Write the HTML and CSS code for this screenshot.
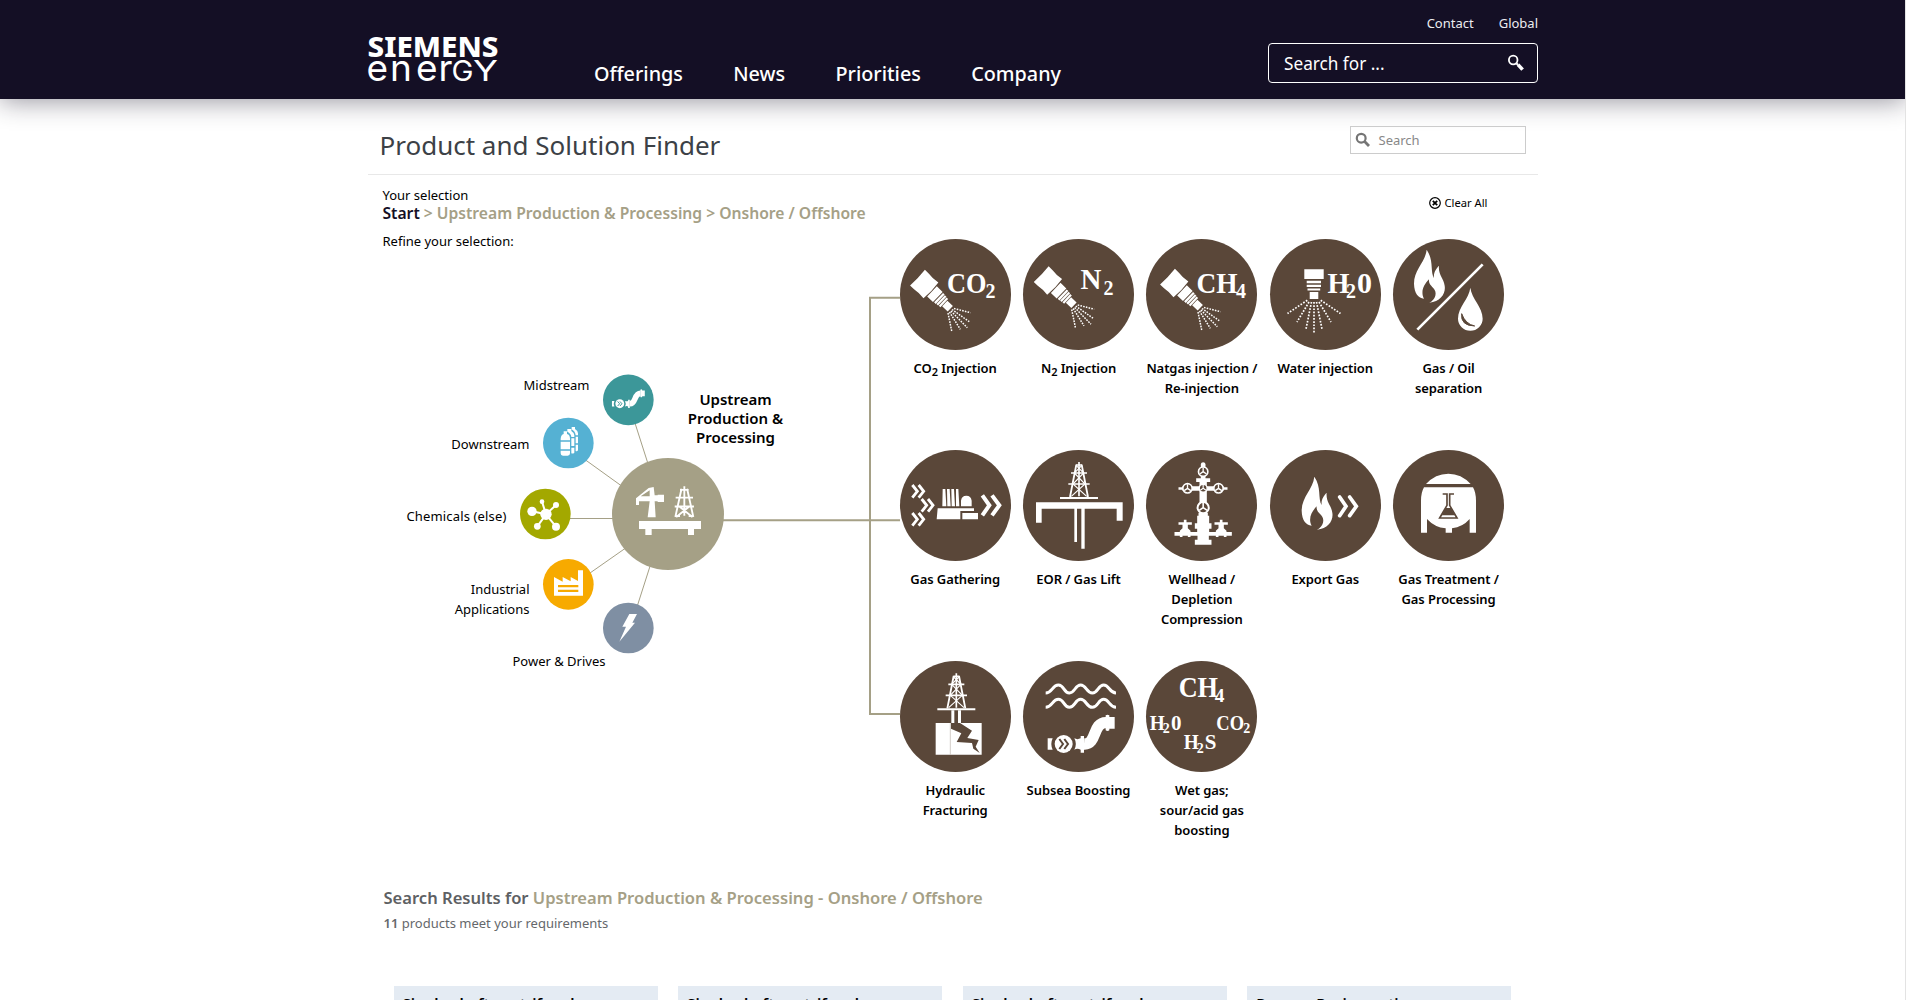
FILE: index.html
```html
<!DOCTYPE html>
<html lang="en">
<head>
<meta charset="utf-8">
<title>Product and Solution Finder</title>
<link rel="stylesheet" href="styles.css">
</head>
<body>
<svg class="defs" aria-hidden="true">
  <defs>
    <g id="nozzle">
      <g transform="translate(50.5 70) rotate(-46.5)" fill="#fff">
        <path d="M-10.8-45.5Q0-44.5 10.8-45.5V-40Q9.8-34 10.8-27Q0-25.5-10.8-27Q-9.8-34-10.8-40Z"/>
        <path d="M-7-25.500h14v8h-14zM-6.500-16.5h13v2.300h-13zM-6.100-13.600h12.200v2.200h-12.200zM-5.600-10.8h11.200v2.200h-11.200zM-3.800-7.9h7.600V-.3h-7.600z"/>
      </g>
      <g fill="none" stroke="#fff" stroke-width="1.5" stroke-dasharray="1.6 1.2">
        <path d="M54 69.5L70.5 73.7M52 70.5L69.3 82.7M51 72L67.3 88.7M49.5 73L60.3 90.3M48 74L51.7 92"/>
      </g>
    </g>
    <path id="flame" d="M680 74C676 112 642 134 642 176C643 206 655 218 672 221C661 200 671 180 687 163C684 186 712 186 706 212Q702 226 688 233C722 230 738 205 734 182C731 160 714 150 717 122C708 132 700 142 702 160C690 138 702 106 680 74Z"/>
    <g id="derrick" fill="none" stroke="#fff">
      <path stroke-width="6" d="M-57-3H57"/>
      <path stroke-width="5" d="M0-111V-8M-9-102H9M-24-78H24M-32-45H32"/>
      <path stroke-width="5.5" d="M-8-103L-27-6M8-103L27-6"/>
      <path stroke-width="3.5" d="M-8-100L14-78L-18-45L23-8M8-100L-14-78L18-45L-23-8"/>
    </g>
    <g id="wheel">
      <circle r="14" fill="#5a4739" stroke="#fff" stroke-width="5"/>
      <path d="M0 0V-12M0 0L-10 7M0 0L10 7" stroke="#fff" stroke-width="4"/>
    </g>
    <g id="pipe">
      <path d="M563 265H578Q570 282 578 299H563ZM643 265Q652 270 662 265V258H672V299L672 308H662V299Q652 294 643 299Q652 282 643 265Z"/>
      <path d="M672 282C712 284 696 218 738 218" fill="none" stroke="#fff" stroke-width="34"/>
      <path d="M737 200V196Q743 192 748 196V201H764V236H748V241Q743 245 737 241Z"/>
      <circle cx="611" cy="282" r="27"/>
    </g>
  </defs>
</svg>

<header class="header">
  <div class="wrap header-inner">
    <svg class="logo" width="132" height="50" viewBox="0 0 132 50" role="img" aria-label="Siemens Energy">
      <text class="logo-top" x="-0.5" y="22.6" textLength="131" lengthAdjust="spacingAndGlyphs">SIEMENS</text>
      <text class="logo-bottom" y="46.8" x="-1.5 22 48 70.5">ener</text>
      <text class="logo-bottom logo-caps" y="46.8" x="83.5" textLength="22" lengthAdjust="spacingAndGlyphs">g</text>
      <text class="logo-bottom logo-caps" y="46.8" x="105" textLength="25" lengthAdjust="spacingAndGlyphs">y</text>
    </svg>
    <nav class="nav">
      <a>Offerings</a><a>News</a><a>Priorities</a><a>Company</a>
    </nav>
    <div class="tools">
      <div class="meta"><a>Contact</a><a>Global</a></div>
      <div class="site-search">
        <span>Search for ...</span>
        <svg width="18" height="18" viewBox="0 0 18 18" fill="none" stroke="#fff"><circle cx="6.2" cy="6" r="4.3" stroke-width="1.8"/><path d="M9.5 9.4L11 10.8" stroke-width="2"/><path d="M11 10.6L15.6 15.6" stroke-width="3.6"/></svg>
      </div>
    </div>
  </div>
</header>

<main class="wrap">
  <div class="title-row">
    <h1>Product and Solution Finder</h1>
    <div class="finder-search">
      <svg width="16" height="16" viewBox="0 0 16 16" fill="none" stroke="#757575"><circle cx="6.2" cy="6.2" r="4.4" stroke-width="2.2"/><path d="M9.6 9.6L14 14" stroke-width="2.8"/></svg>
      <span>Search</span>
    </div>
  </div>

  <div class="finder">
    <section class="left">
      <p class="small">Your selection</p>
      <p class="crumbs"><b>Start</b> &gt; Upstream Production &amp; Processing &gt; Onshore / Offshore</p>
      <p class="small refine">Refine your selection:</p>

      <svg class="links" width="532" height="560" viewBox="368 175 532 560" fill="none" stroke="#a5a086">
        <path stroke-width="2" d="M720 520.2H902M902 297.8H870V714H902"/>
        <path stroke-width="1" d="M634 420L650 470M580 456L630 492M560 518.5H620M580 580L630 545M636 610L652 560"/>
        <g transform="translate(390 360) scale(.33333)" stroke="none">
          <circle cx="834" cy="462" r="168" fill="#a5a086"/>
          <circle cx="715" cy="119.500" r="76" fill="#3c9799"/>
          <circle cx="535" cy="249" r="76" fill="#55b1d3"/>
          <circle cx="466" cy="462" r="76" fill="#a3a800"/>
          <circle cx="535" cy="673" r="76" fill="#f7aa00"/>
          <circle cx="715" cy="804" r="76" fill="#7f8fa3"/>
          <g fill="#fff">
            <path d="M747 483H933V507H912V525H894V507H785V525H766V507H747ZM773 472L779 424H747V435H738V415L776 384L791 381L794 406H803V404H822V426H803V424H794L797 472ZM752 409H779V391Z" fill-rule="evenodd"/>
            <g transform="translate(883 480) scale(.93 .92)"><path stroke="#fff" fill="none" stroke-width="6" d="M0-110V-14M-14-98H14M-28-73H28M-31-44H31M-9-102L-29-10M9-102L29-10M-16-44L26-10M16-44L-26-10M-30-13H-14M30-13H14"/></g>
            <g transform="translate(390 -7) scale(.49)"><use href="#pipe"/><path d="M598 268l12 14-12 14M612 268l12 14-12 14" fill="none" stroke="#3c9799" stroke-width="6"/></g>
            <path d="M512 236Q513 224 521 222V214H531V222Q540 224 540 236V241H512ZM512 245H540V268H512ZM512 272H540V280Q540 287 533 287H519Q512 287 512 280Z"/>
            <path d="M532 215V207H544V213Q553 218 553 226V231H544Q543 220 532 215ZM544 235H553V258H544ZM544 263H553V278Q549 282 544 280ZM545 208V201H555V207Q564 212 564 220V226H557Q556 214 545 208ZM557 230H564V250H557ZM557 254H564V271Q561 275 557 273Z"/>
            <circle cx="468" cy="463" r="17"/><circle cx="426" cy="454" r="14"/><circle cx="456" cy="425" r="7"/><circle cx="498" cy="435" r="9"/><circle cx="442" cy="499" r="10"/><circle cx="498" cy="500" r="12"/>
            <path d="M468 463L426 454M468 463L456 425M468 463L498 435M468 463L442 499M468 463L498 500" stroke="#fff" stroke-width="6"/>
            <path d="M492 707V651L518 665V651L542 664V651L564 663V631H579V707ZM504 675V682H565V675ZM504 689V696H565V689Z" fill-rule="evenodd"/>
            <path d="M718 762H741L727 788H735L688 845L708 800H697Z"/>
          </g>
        </g>
      </svg>
      <span class="node n-mid">Midstream</span>
      <span class="node n-down">Downstream</span>
      <span class="node n-chem">Chemicals (else)</span>
      <span class="node n-ind">Industrial<br>Applications</span>
      <span class="node n-power">Power &amp; Drives</span>
      <span class="node n-hub">Upstream<br>Production &amp;<br>Processing</span>
    </section>

    <section class="right">
      <a class="clear"><svg width="12" height="12" viewBox="0 0 12 12" fill="none" stroke="#000"><circle cx="6" cy="6" r="5.3" stroke-width="1.2"/><path d="M3.8 3.8L8.200 8.200M8.200 3.800L3.800 8.200" stroke-width="1.800"/></svg>Clear All</a>
      <div class="grid">
        <a class="tile"><svg viewBox="0 0 111 111"><use href="#nozzle"/><text class="f" x="47" y="54" font-size="30" textLength="39.500" lengthAdjust="spacingAndGlyphs">CO</text><text class="f" x="85.500" y="58.700" font-size="20">2</text></svg><span>CO<sub>2</sub> Injection</span></a>
        <a class="tile"><svg viewBox="0 0 111 111"><use href="#nozzle" x="0.700" y="-3.500"/><text class="f" x="57.500" y="50" font-size="29">N</text><text class="f" x="80.500" y="55.700" font-size="20">2</text></svg><span>N<sub>2</sub> Injection</span></a>
        <a class="tile"><svg viewBox="0 0 111 111"><use href="#nozzle" x="4" y="-1"/><text class="f" x="50.500" y="53.500" font-size="30" textLength="41" lengthAdjust="spacingAndGlyphs">CH</text><text class="f" x="90" y="58.700" font-size="20">4</text></svg><span>Natgas injection /<br>Re-injection</span></a>
        <a class="tile"><svg viewBox="0 0 111 111"><path fill="#fff" d="M34.300 30.300H53.700V40H34.300ZM36.700 41.800H51V44.300H36.700ZM36.700 45.700H51V48H36.700ZM37.500 49.400H50.200V51.600H37.500ZM39.700 53H48.300V60H39.700Z"/><path fill="none" stroke="#fff" stroke-width="1.700" stroke-dasharray="1.700 1.500" d="M37.300 61.300L17.500 74.500M39 63L27 83M41.500 63L36 90M44 63V94.500M46.500 63L52 90M49 63L61 83M50.700 61.300L70.500 74.500"/><text class="f" x="57.500" y="54.300" font-size="29" textLength="22" lengthAdjust="spacingAndGlyphs">H</text><text class="f" x="76" y="58.700" font-size="20">2</text><text class="f" x="87" y="54.300" font-size="30">0</text></svg><span>Water injection</span></a>
        <a class="tile"><svg viewBox="0 0 111 111"><g transform="translate(-193 -14) scale(.33333)" fill="#fff"><use href="#flame"/><path d="M652 314L848 118" stroke="#fff" stroke-width="8"/><path d="M811 188C807 222 774 246 774 281A37 36 0 0 0 848 281C848 246 815 222 811 188Z"/><path d="M785 266Q781 302 824 303Q796 297 785 266Z" fill="#5a4739" stroke="#5a4739" stroke-width="3"/></g></svg><span>Gas / Oil<br>separation</span></a>

        <a class="tile"><svg viewBox="0 0 111 111"><g transform="translate(-10 -10) scale(.33333)" fill="#fff"><g fill="none" stroke="#fff"><path stroke-width="8.500" d="M67 135L82 154L67 173M86 135L101 154L86 173M95 177L110 196L95 215M114 177L129 196L114 215M67 219L82 238L67 257M86 219L101 238L86 257"/><path stroke-width="12" d="M277 166L298 196L277 226M306 166L328 196L306 226"/></g><path d="M158 147H166L169 199H157ZM171 147H179L182 199H172ZM184 147H192L195 199H185ZM198 147H205L208 199H198ZM213 199V182Q215 167 229 167Q243 167 245 182V199ZM143 205H252V213H211V238H140ZM217 219H264V238H217Z"/></g></svg><span>Gas Gathering</span></a>
        <a class="tile"><svg viewBox="0 0 111 111"><g transform="translate(-133 -10) scale(.33333)" fill="#fff"><use href="#derrick" x="567" y="177"/><path d="M438 187H698V242H680V206H584V326H574V206H561V306H553V206H455V248H438Z"/></g></svg><span>EOR / Gas Lift</span></a>
        <a class="tile"><svg viewBox="0 0 111 111"><g transform="translate(-1.500 -2) scale(.33333)" fill="#fff"><path d="M169 48Q170 43 176 43Q182 43 183 48V91H197V102H187V115H237V118H249V125H237V128H187V195H190V203H194V226H201V242H194V252H214V248L222 241V230H210V223H226V215H234V223H250V230H238V241L246 248V252H262V263H246V267H238V263H222V267H214V263H193V275H201V290H151V275H159V263H138V267H130V263H114V267H106V263H90V252H106V248L114 241V230H102V223H118V215H126V223H142V230H130V241L138 248V252H158V242H151V226H158V203H162V195H165V128H114V125H102V118H114V115H165V102H155V91H169Z"/><use href="#wheel" x="176" y="71"/><use href="#wheel" x="129" y="121"/><use href="#wheel" x="222" y="121"/><use href="#wheel" transform="translate(176 121) scale(.85)"/><use href="#wheel" transform="translate(176 179) scale(1.200)"/></g></svg><span>Wellhead /<br>Depletion<br>Compression</span></a>
        <a class="tile"><svg viewBox="0 0 111 111"><g transform="translate(-70 -10) scale(.33333)" fill="#fff"><use href="#flame" x="-337" y="36"/><path fill="none" stroke="#fff" stroke-width="11" stroke-linecap="round" d="M419 171L438 199L419 227M449 171L469 199L449 227"/></g></svg><span>Export Gas</span></a>
        <a class="tile"><svg viewBox="0 0 111 111"><g transform="translate(-193 -10) scale(.33333)" fill="#fff"><path d="M678 132Q706 101 745 101Q784 101 812 132ZM672 142H819Q828 158 828 182V278H809V237Q788 261 756 265V278H737V265Q704 262 681 237V278H663V182Q663 158 672 142Z"/><path fill="none" stroke="#5a4739" stroke-width="5" d="M728 162H741V196L719 234H771L749 196V162H762"/><path fill="#5a4739" d="M737 204H753L765 226H725Z"/></g></svg><span>Gas Treatment /<br>Gas Processing</span></a>

        <a class="tile"><svg viewBox="0 0 111 111"><g transform="translate(-40 -11) scale(.33333)" fill="#fff"><use href="#derrick" x="289" y="181"/><path d="M274 181H283V219H274ZM294 181H303V219H294ZM227 219H365V314H227Z"/><path d="M271 219V314" stroke="#bdb5ae" stroke-width="2"/><path fill="#5a4739" d="M273 219H300L336 242L322 264L356 270L347 290L359 309L340 296L336 279L290 276L304 250L273 236Z"/></g></svg><span>Hydraulic<br>Fracturing</span></a>
        <a class="tile"><svg viewBox="0 0 111 111"><g transform="translate(-163 -11) scale(.33333)" fill="#fff"><path fill="none" stroke="#fff" stroke-width="9" d="M557 129C577 129 577 105 595 105S611 129 628 129S645 105 662 105S679 129 697 129S714 105 731 105S748 129 768 129M557 172C577 172 577 148 595 148S611 172 628 172S645 148 662 148S679 172 697 172S714 148 731 148S748 172 768 172"/><use href="#pipe"/><path fill="none" stroke="#5a4739" stroke-width="6" d="M598 267L609 282L598 297M613 267L624 282L613 297"/></g></svg><span>Subsea Boosting</span></a>
        <a class="tile"><svg viewBox="0 0 111 111"><g transform="translate(-286 -11) scale(.33333)"><text class="f" x="956" y="142" font-size="91" textLength="118" lengthAdjust="spacingAndGlyphs">CH</text><text class="f" x="1064" y="155" font-size="58">4</text><text class="f" x="869" y="240" font-size="63" textLength="45" lengthAdjust="spacingAndGlyphs">H</text><text class="f" x="908" y="250" font-size="42">2</text><text class="f" x="933" y="240" font-size="63">0</text><text class="f" x="1069" y="240" font-size="63" textLength="83" lengthAdjust="spacingAndGlyphs">CO</text><text class="f" x="1150" y="250" font-size="42">2</text><text class="f" x="971" y="297" font-size="63" textLength="45" lengthAdjust="spacingAndGlyphs">H</text><text class="f" x="1010" y="308" font-size="42">2</text><text class="f" x="1034" y="297" font-size="63">S</text></g></svg><span>Wet gas;<br>sour/acid gas<br>boosting</span></a>
      </div>
    </section>
  </div>

  <section class="results">
    <h2>Search Results for <em>Upstream Production &amp; Processing - Onshore / Offshore</em></h2>
    <p><b>11</b> products meet your requirements</p>
    <div class="cards">
      <article class="card">Single-shaft centrifugal</article>
      <article class="card">Single-shaft centrifugal</article>
      <article class="card">Single-shaft centrifugal</article>
      <article class="card">Process Reciprocating</article>
    </div>
  </section>
</main>
</body>
</html>
```
FILE: styles.css
```css
* { box-sizing: border-box; }
body {
  margin: 0;
  height: 1000px;
  overflow: hidden;
  background: #fff;
  color: #000;
  font-family: "Noto Sans", "Open Sans", sans-serif;
  border-right: 1px solid #e3e3e3;
}
p, h1, h2 { margin: 0; font-weight: 400; }
.defs { position: absolute; width: 0; height: 0; }
.wrap { width: 1170px; margin: 0 auto; }

.header {
  height: 99px;
  background: #140f25;
  color: #fff;
  box-shadow: 0 2px 25px rgba(20, 15, 37, .45);
  margin-right: -1px;
}
.header-inner { display: flex; height: 99px; }
.logo { margin-top: 34px; overflow: visible; fill: #fff; }
.logo-top { font: 800 28px "Noto Sans", sans-serif; }
.logo-bottom { font: 400 37px Inter, sans-serif; }
.logo-caps { font-size: 28px; text-transform: uppercase; }
.nav {
  display: flex;
  gap: 50.3px;
  margin: 60px 0 0 94px;
  font-size: 19.8px;
  font-weight: 500;
  line-height: 28px;
}
.tools { margin-left: auto; width: 270px; }
.meta {
  display: flex;
  justify-content: flex-end;
  gap: 25px;
  padding-top: 14px;
  font-size: 13px;
  line-height: 18px;
  color: #ececf0;
}
.site-search {
  display: flex;
  align-items: center;
  justify-content: space-between;
  height: 40px;
  margin-top: 11px;
  padding: 0 12px 0 15px;
  border: 1px solid #fff;
  border-radius: 4px;
  font-size: 17.2px;
}

.title-row {
  display: flex;
  justify-content: space-between;
  height: 76px;
  padding: 26px 12px 0 12px;
  border-bottom: 1px solid #e8e8e8;
}
h1 { font-size: 26px; line-height: 40px; color: #3c4146; }
.finder-search {
  display: flex;
  align-items: center;
  gap: 8px;
  width: 176px;
  height: 28px;
  margin-top: 1px;
  padding-left: 4px;
  border: 1px solid #ccc;
  color: #888;
  font-size: 13px;
}

.finder { display: flex; height: 697px; }
.left { position: relative; width: 526px; padding: 11px 0 0 15px; }
.small { font-size: 13px; line-height: 18px; }
.crumbs {
  font-size: 15.65px;
  line-height: 18px;
  font-weight: 600;
  color: #a5a086;
  white-space: nowrap;
}
.crumbs b { font-weight: 600; color: #140f25; }
.refine { margin-top: 10px; }
.links { position: absolute; left: 0; top: 0; }
.node {
  position: absolute;
  font-size: 13px;
  line-height: 20px;
  text-align: right;
  white-space: nowrap;
}
.n-mid { top: 200px; right: 304px; }
.n-down { top: 259px; right: 364px; }
.n-chem { top: 331px; right: 387px; letter-spacing: .15px; }
.n-ind { top: 404px; right: 364px; }
.n-power { top: 476px; right: 288px; }
.n-hub {
  top: 215px;
  left: 320px;
  width: 96px;
  text-align: center;
  font-size: 15px;
  font-weight: 600;
  line-height: 19px;
}

.right { width: 617px; padding-top: 20px; }
.clear {
  display: flex;
  align-items: center;
  justify-content: flex-end;
  gap: 4px;
  margin-right: 23px;
  font-size: 11.2px;
  line-height: 16px;
}
.grid {
  display: grid;
  grid-template-columns: repeat(5, 123.35px);
  grid-auto-rows: 211px;
  margin-top: 28px;
}
.tile { display: flex; flex-direction: column; align-items: center; }
.tile svg { width: 111px; height: 111px; border-radius: 50%; background: #5a4739; flex: none; }
.tile span {
  margin-top: 8px;
  font-size: 13px;
  font-weight: 600;
  line-height: 20px;
  letter-spacing: -.08px;
  text-align: center;
  white-space: nowrap;
}
.tile sub { font-size: 11px; line-height: 0; vertical-align: -3px; }
.f { font-family: "Liberation Serif", "Times New Roman", serif; font-weight: 700; fill: #fff; }

.results { padding-top: 14px; }
.results h2 { padding-left: 16px; font-size: 16.57px; line-height: 24px; font-weight: 600; color: #5d6063; }
.results h2 em { font-style: normal; color: #a5a086; }
.results p { margin-top: 3px; padding-left: 16px; font-size: 13px; line-height: 20px; color: #65686b; }
.results p b { font-weight: 600; }
.cards {
  display: grid;
  grid-template-columns: repeat(4, 264px);
  gap: 20.6px;
  margin: 53px 0 0 26px;
}
.card {
  height: 200px;
  padding: 7px 9px;
  background: #e4ebf3;
  font-size: 15.1px;
  font-weight: 600;
  line-height: 20px;
}
```
